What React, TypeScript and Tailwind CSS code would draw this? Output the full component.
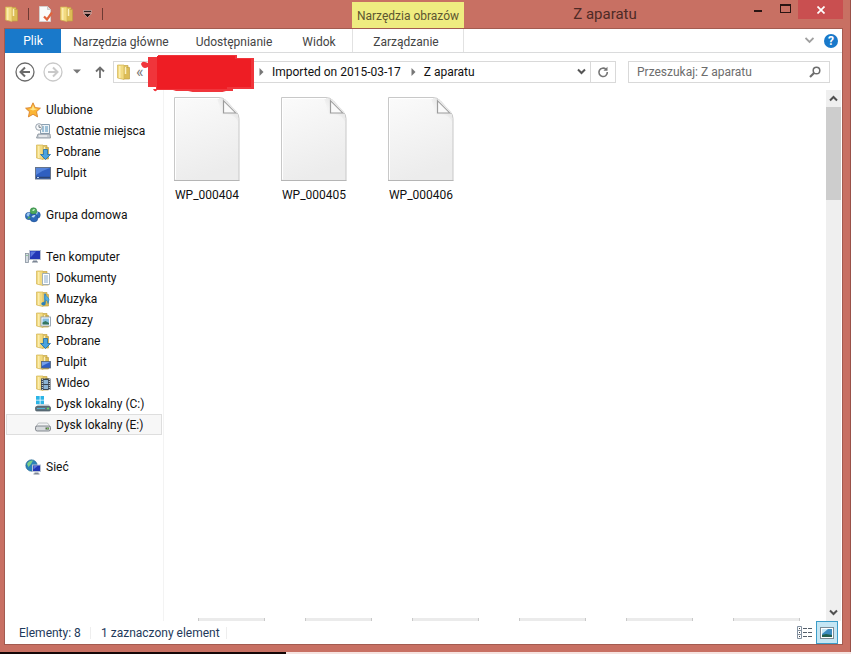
import React, { useState } from 'react';
import clsx from 'clsx';

type IconName =
  | 'star' | 'recent' | 'downloads' | 'desktop' | 'homegroup' | 'computer'
  | 'documents' | 'music' | 'pictures' | 'folderDesktop' | 'video' | 'diskC' | 'diskE' | 'network';

const groups: { id: string; label: string; icon: IconName; items: { label: string; icon: IconName }[] }[] = [
  {
    id: 'fav',
    label: 'Ulubione',
    icon: 'star',
    items: [
      { label: 'Ostatnie miejsca', icon: 'recent' },
      { label: 'Pobrane', icon: 'downloads' },
      { label: 'Pulpit', icon: 'desktop' },
    ],
  },
  { id: 'home', label: 'Grupa domowa', icon: 'homegroup', items: [] },
  {
    id: 'pc',
    label: 'Ten komputer',
    icon: 'computer',
    items: [
      { label: 'Dokumenty', icon: 'documents' },
      { label: 'Muzyka', icon: 'music' },
      { label: 'Obrazy', icon: 'pictures' },
      { label: 'Pobrane', icon: 'downloads' },
      { label: 'Pulpit', icon: 'folderDesktop' },
      { label: 'Wideo', icon: 'video' },
      { label: 'Dysk lokalny (C:)', icon: 'diskC' },
      { label: 'Dysk lokalny (E:)', icon: 'diskE' },
    ],
  },
  { id: 'net', label: 'Sieć', icon: 'network', items: [] },
];

const files = ['WP_000404', 'WP_000405', 'WP_000406'];

function FolderShape() {
  return (
    <>
      <path d="M5 1.500h7v13H5z" fill="#e3c765" stroke="#c3a244" strokeWidth=".7" />
      <path d="M7.500 3.500h6v11.500h-6z" fill="#dcbc55" stroke="#c0a044" strokeWidth=".7" />
      <path d="M1.500 1h6.500v14.500L1.500 14z" fill="#f2da80" stroke="#d3b455" strokeWidth=".7" />
      <path d="M3 2h1.500v12H3z" fill="#fbedaf" />
      <path d="M9.500 3v7" stroke="#fbf0c0" strokeWidth="1.500" />
    </>
  );
}

function FolderIcon() {
  return (
    <svg width="16" height="16" viewBox="0 0 16 16" className="shrink-0">
      <FolderShape />
    </svg>
  );
}

function Monitor({ x, y, w, h }: { x: number; y: number; w: number; h: number }) {
  return (
    <>
      <rect x={x} y={y} width={w} height={h} fill="#2337b5" stroke="#b9c3d3" strokeWidth="1" />
      <path d={`M${x + 1} ${y + 1}h${w / 2}l${-w / 2} ${h - 3}z`} fill="#5b76dd" />
      <path d={`M${x + w / 2 - 2} ${y + h + 1}h4v1h1v1h-6v-1h1z`} fill="#7b8594" />
    </>
  );
}

function Globe({ x, y, r, land }: { x: number; y: number; r: number; land: string }) {
  return (
    <>
      <circle cx={x} cy={y} r={r} fill="#2f6fc0" stroke="#1f4d8d" strokeWidth=".5" />
      <path d={`M${x - r + 1} ${y - 1}q${r / 2} ${-r} ${r} ${-r / 2}q${-r / 3} ${r} ${-r / 2} ${r}z`} fill={land} />
    </>
  );
}

function NavIcon({ name }: { name: IconName }) {
  return (
    <svg width="16" height="16" viewBox="0 0 16 16" className="shrink-0">
      {name === 'star' && (
        <>
          <path d="M8 .8l2.200 4.800 5.200.6-3.900 3.500 1.100 5.200L8 12.300l-4.600 2.600 1.100-5.200L.6 6.200l5.200-.6z" fill="#fbb534" stroke="#d9822b" strokeWidth=".9" />
          <path d="M8 3l1.400 3.500 3.200.5-4.600 1.500-4-1.500 2.800-.5z" fill="#ffe58a" />
        </>
      )}
      {name === 'recent' && (
        <>
          <path d="M5.500 1.500h9v9h-9z" fill="#eef4f8" stroke="#8ba1b3" />
          <path d="M7 4h2M10 4h3M7 6h2M10 6h3M7 8h2M10 8h3" stroke="#4e8fb8" />
          <path d="M3 11h12l.5 4H1.500z" fill="#c9ced4" stroke="#848d97" strokeWidth=".8" />
          <path d="M4 13h8" stroke="#fff" />
          <circle cx="4" cy="4" r="3.300" fill="#f7f9fa" stroke="#98a3ad" />
          <path d="M4 2v2.300h2" fill="none" stroke="#59636e" strokeWidth=".8" />
        </>
      )}
      {name === 'desktop' && (
        <>
          <rect x=".5" y="2.500" width="15" height="11.500" fill="#2f5fc0" stroke="#66748a" />
          <path d="M1 3h14Q8 5 1 10z" fill="#5685dc" />
          <path d="M1 12.500h14" stroke="#2a4475" strokeWidth="1.500" />
          <path d="M2 12.500h2" stroke="#b9d3f5" />
        </>
      )}
      {name === 'homegroup' && (
        <>
          <Globe x={4} y={9} r={3.7} land="#9cc8ef" />
          <Globe x={12} y={8} r={3.3} land="#9cc8ef" />
          <circle cx="8.500" cy="4" r="3.300" fill="#4ca85a" stroke="#2a7a3a" strokeWidth=".5" />
          <circle cx="9" cy="11" r="3.900" fill="#2c68b8" stroke="#1c4a8a" strokeWidth=".5" />
          <path d="M6.500 10q1-2.500 4-2l-1.500 2.500z" fill="#c0dcf7" />
          <path d="M7 3.500q1-2 3-1.500l-1 2z" fill="#d3f4cd" />
          <path d="M2 12l2-3 2 2z" fill="#4ca85a" />
        </>
      )}
      {name === 'computer' && (
        <>
          <rect x=".5" y="4.500" width="3" height="9" fill="#d5dbe2" stroke="#87929e" strokeWidth=".8" />
          <path d="M1.500 6.500h1" stroke="#4fae52" />
          <Monitor x={4.500} y={1.500} w={11} h={9} />
        </>
      )}
      {name === 'network' && (
        <>
          <circle cx="6.500" cy="6.500" r="5.700" fill="#2c83b8" stroke="#1e5f8c" strokeWidth=".6" />
          <path d="M2 5q2-4 6-3.500L6 5 3.500 8zM7 8l3-1v4l-2 .5z" fill="#7ccf86" />
          <Monitor x={7.500} y={6} w={8} h={6.500} />
        </>
      )}
      {['downloads', 'documents', 'music', 'pictures', 'folderDesktop', 'video'].includes(name) && <FolderShape />}
      {name === 'downloads' && (
        <path d="M8.500 5.500h4v5h3l-5 5-5-5h3z" fill="#4aa3df" stroke="#1d6ca8" strokeWidth=".8" />
      )}
      {name === 'documents' && (
        <>
          <path d="M7.500 3.500h7v11h-7z" fill="#fff" stroke="#8fa3b5" strokeWidth=".8" />
          <path d="M9 6h4M9 8h4M9 10h4M9 12h4" stroke="#7ba0c4" strokeWidth=".9" />
        </>
      )}
      {name === 'music' && (
        <>
          <path d="M10 3v9" stroke="#2b7fb8" strokeWidth="1.500" />
          <path d="M10 2.500q1 3 3 4t0 6q0-3-3-4z" fill="#53b0e0" stroke="#2b7fb8" strokeWidth=".6" />
          <ellipse cx="8.500" cy="12.800" rx="2.200" ry="1.700" fill="#2b7fb8" />
        </>
      )}
      {name === 'pictures' && (
        <>
          <rect x="6" y="5" width="9.500" height="9" fill="#fff" stroke="#8495a5" strokeWidth=".8" />
          <rect x="7.500" y="6.500" width="6.500" height="6" fill="#86bfe2" />
          <path d="M7.500 12.500v-2l3-1.500 3.500 2v1.500z" fill="#35755f" />
        </>
      )}
      {name === 'folderDesktop' && (
        <>
          <rect x="6.500" y="7.500" width="9" height="6.500" fill="#2f5fc4" stroke="#54657c" strokeWidth=".8" />
          <path d="M7 8h8l-8 4z" fill="#759fea" />
        </>
      )}
      {name === 'video' && (
        <>
          <rect x="6" y="3.500" width="9.500" height="11.500" fill="#3b4652" />
          <path d="M7.300 4v11M14.300 4v11" stroke="#e1e6ea" strokeDasharray="1 1" />
          <path d="M8.500 5h4.500v4h-4.500zM8.500 10h4.500v4h-4.500z" fill="#8cb4d4" />
        </>
      )}
      {name === 'diskC' && (
        <>
          <path d="M1 0h3.700v3.700H1zM5.500 0H9v3.700H5.500zM1 4.500h3.700v3.700H1zM5.500 4.500H9v3.700H5.500z" fill="#2bb4e6" />
          <path d="M3 8.500h11l1.500 3H.5z" fill="#b9c3ca" />
          <rect x=".5" y="10.500" width="15" height="4.500" rx="1.300" fill="#61737e" stroke="#44545e" strokeWidth=".7" />
          <path d="M2 12.500h8" stroke="#58b2d3" />
          <path d="M12 12.500h2" stroke="#69dc5a" strokeWidth="1.500" />
        </>
      )}
      {name === 'diskE' && (
        <>
          <path d="M3.500 6h9l3 4H.5z" fill="#f2f3f4" stroke="#a4a9ae" strokeWidth=".7" />
          <rect x=".5" y="9" width="15" height="5" rx="1.800" fill="#d6d9dc" stroke="#777d83" strokeWidth=".9" />
          <rect x="10.500" y="10.500" width="3.500" height="2" fill="#566b4c" />
          <path d="M12 11.500h1.500" stroke="#7ad05d" />
        </>
      )}
    </svg>
  );
}

function FileIcon() {
  return (
    <svg width="68" height="86" viewBox="0 0 68 86">
      <defs>
        <linearGradient id="paper" x1="0" y1="0" x2=".3" y2="1">
          <stop offset="0" stopColor="#fbfbfb" />
          <stop offset=".4" stopColor="#f5f5f5" />
          <stop offset="1" stopColor="#ececec" />
        </linearGradient>
        <linearGradient id="shade" x1="0" y1="1" x2="1" y2="0">
          <stop offset=".4" stopColor="#f3f3f3" />
          <stop offset="1" stopColor="#d6d6d6" />
        </linearGradient>
      </defs>
      <path d="M1.500 1.500H46q4 0 7 3l10 11q3 3 3 7V84.500H1.500z" fill="url(#paper)" stroke="#c8c8c8" />
      <path d="M44 2h3l6 3 10 11 2 4v6q-3-7-9-7h-7z" fill="url(#shade)" />
      <path d="M2.500 83.500V2.500H46" fill="none" stroke="#fff" />
      <path d="M1 84.500h65.500" stroke="#b5b5b5" />
      <path d="M50.500 4.500V17H63z" fill="#fafafa" stroke="#9c9c9c" strokeWidth="1.200" />
      <path d="M51 3.500q1 1 13 13" fill="none" stroke="#e8e8e8" strokeWidth="1.500" />
    </svg>
  );
}

function TitleBar() {
  return (
    <header className="flex h-7 shrink-0 text-[#3b2320]">
      <div className="flex w-[348px] shrink-0 items-center">
        <FolderIcon />
        <span className="ml-2 h-3 w-px bg-[#6d3a33]" />
        <button aria-label="Właściwości" className="ml-2">
          <svg width="16" height="16" viewBox="0 0 16 16">
            <path d="M2.500.5h8l3 3v12h-11z" fill="#fafafa" stroke="#d5cfcd" />
            <path d="M10.500.5v3h3" fill="#ddd" stroke="#bbb" strokeWidth=".7" />
            <path d="M7 10.500l3 3 5-7" fill="none" stroke="#e0633b" strokeWidth="2.200" />
          </svg>
        </button>
        <button aria-label="Nowy folder" className="ml-1.5"><FolderIcon /></button>
        <button aria-label="Dostosuj" className="ml-2">
          <svg width="9" height="8" viewBox="0 0 9 8">
            <path d="M.5.500h8v1.800h-8zM.5 3.500h8L4.500 7.500z" fill="#1c1010" stroke="#f0d6d2" strokeWidth=".5" />
          </svg>
        </button>
        <span className="ml-2.5 h-3 w-px bg-[#6d3a33]" />
      </div>
      <div className="mt-0.5 flex w-28 shrink-0 items-center justify-center bg-[#efec80] pt-0.5 text-[12px] text-[#5d5630]">
        Narzędzia obrazów
      </div>
      <h1 className="flex-1 pl-0.5 text-center text-[15px] leading-7 text-[#4e2a26]">Z aparatu</h1>
      <button aria-label="Minimalizuj" className="flex h-5 w-7 justify-center pt-2.5">
        <span className="h-0.5 w-2 bg-[#2a1513]" />
      </button>
      <button aria-label="Maksymalizuj" className="flex h-5 w-[26px] justify-center pt-1">
        <span className="h-[9px] w-[11px] border border-t-2 border-[#2a1513]" />
      </button>
      <button aria-label="Zamknij" className="flex h-[19px] w-[45px] items-center justify-center bg-[#c94f50]">
        <svg width="8" height="8" viewBox="0 0 8 8">
          <path d="M.5.5l7 7M7.500.5l-7 7" stroke="#fff" strokeWidth="1.700" />
        </svg>
      </button>
    </header>
  );
}

function Ribbon() {
  return (
    <nav className="flex h-6 shrink-0 items-stretch border-b border-[#dadbdc] text-[12px] text-[#444]">
      <button className="-mb-px w-14 bg-[#1979ca] text-white">Plik</button>
      <button className="w-[120px] pt-0.5">Narzędzia główne</button>
      <button className="w-[106px] pt-0.5">Udostępnianie</button>
      <button className="w-16 pt-0.5">Widok</button>
      <button className="ml-px w-28 border-x border-[#e2e2e2] pt-0.5 pr-1">Zarządzanie</button>
      <div className="ml-auto flex items-center gap-2.5 pr-1">
        <button aria-label="Minimalizuj wstążkę">
          <svg width="9" height="7" viewBox="0 0 9 7">
            <path d="M.5 1l4 4 4-4" fill="none" stroke="#a0a0a0" strokeWidth="1.800" />
          </svg>
        </button>
        <button aria-label="Pomoc" className="size-3.5 rounded-full bg-[#1979ca] text-[12px] leading-3.5 font-bold text-white">
          ?
        </button>
      </div>
    </nav>
  );
}

function Crumb() {
  return (
    <svg width="5" height="8" viewBox="0 0 5 8" className="shrink-0">
      <path d="M.5 0l4 4-4 4z" fill="#777" />
    </svg>
  );
}

function AddressRow() {
  const [query, setQuery] = useState('');

  return (
    <div className="flex h-[37px] shrink-0 items-center pr-3">
      <button aria-label="Wstecz" className="ml-2.5">
        <svg width="20" height="20" viewBox="0 0 20 20" fill="none" stroke="#6b6b6b">
          <circle cx="10" cy="10" r="9" strokeWidth="1.300" />
          <path d="M15 10H6M10 5.500L5.500 10l4.500 4.500" strokeWidth="2" />
        </svg>
      </button>
      <button aria-label="Dalej" className="ml-2">
        <svg width="20" height="20" viewBox="0 0 20 20" fill="none" stroke="#c9c9c9">
          <circle cx="10" cy="10" r="9" strokeWidth="1.300" />
          <path d="M5 10h9M10 5.500l4.500 4.500-4.500 4.500" strokeWidth="2" />
        </svg>
      </button>
      <button aria-label="Historia" className="ml-2.5">
        <svg width="8" height="5" viewBox="0 0 8 5"><path d="M0 .5h8L4 4.500z" fill="#777" /></svg>
      </button>
      <button aria-label="W górę" className="ml-3.5">
        <svg width="10" height="12" viewBox="0 0 10 12" fill="none" stroke="#6f6f6f" strokeWidth="1.800">
          <path d="M5 12V1.500M1 5.500l4-4 4 4" />
        </svg>
      </button>
      <div className="ml-2 flex h-[22px] min-w-0 flex-1 items-center border border-[#d9d9d9] pl-0.5 text-[12px] text-[#111]">
        <FolderIcon />
        <span className="relative ml-1 w-[123px] shrink-0 text-[16px] leading-4 text-[#777]">
          «
          <svg width="122" height="40" viewBox="0 0 122 40" className="absolute -top-3 -left-px">
            <path
              d="M6 12q1-3 4-2l3 1V5h10V3h79v3h17v31h-21v2h-7q-9 3-24 3l-14-3h-12l-3-1H22q-2 3-4-1H21v-2h-8V15q-5 3-7-3z"
              fill="#f0353b"
            />
            <path d="M22 4h78v3h16v28H92v2H22z" fill="#ee1d24" />
          </svg>
        </span>
        <Crumb />
        <span className="ml-2 whitespace-nowrap">Imported on 2015-03-17</span>
        <span className="ml-2.5"><Crumb /></span>
        <span className="ml-2 whitespace-nowrap">Z aparatu</span>
        <button aria-label="Poprzednie lokalizacje" className="ml-auto px-1">
          <svg width="9" height="7" viewBox="0 0 9 7">
            <path d="M1 1.500l3.500 3.500 3.500-3.500" fill="none" stroke="#555" strokeWidth="2" />
          </svg>
        </button>
        <button aria-label="Odśwież" className="flex h-full w-[25px] items-center justify-center border-l border-[#d9d9d9]">
          <svg width="12" height="12" viewBox="0 0 12 12">
            <path d="M9 3.300A4.200 4.200 0 1 0 10.300 6" fill="none" stroke="#747474" strokeWidth="1.600" />
            <path d="M6.500 4.800h4V.8z" fill="#747474" />
          </svg>
        </button>
      </div>
      <label className="ml-3 flex h-[22px] w-[202px] shrink-0 items-center border border-[#d9d9d9] px-2">
        <input
          type="text"
          aria-label="Przeszukaj"
          placeholder="Przeszukaj: Z aparatu"
          value={query}
          onChange={e => setQuery(e.target.value)}
          className="min-w-0 flex-1 text-[12px] outline-none placeholder:text-[#6d6d6d]"
        />
        <svg width="12" height="12" viewBox="0 0 12 12" fill="none" stroke="#6d6d6d">
          <circle cx="7.500" cy="4.500" r="3.300" strokeWidth="1.500" />
          <path d="M5 7L1 11" strokeWidth="2.200" />
        </svg>
      </label>
    </div>
  );
}

function Sidebar() {
  const [selected, setSelected] = useState('pc-Dysk lokalny (E:)');

  return (
    <aside className="w-[159px] shrink-0 border-r border-[#f3f3f3] pt-[9px] pr-px pl-px text-[12px] text-[#111]">
      {groups.map(group => (
        <div key={group.id} className="mb-[21px]">
          <button className="flex h-[21px] w-full items-center gap-[5px] pl-[19px] whitespace-nowrap">
            <NavIcon name={group.icon} />
            {group.label}
          </button>
          {group.items.map(item => {
            const id = `${group.id}-${item.label}`;
            return (
              <button
                key={id}
                onClick={() => setSelected(id)}
                className={clsx(
                  'flex h-[21px] w-full items-center gap-[5px] border pl-7 whitespace-nowrap',
                  selected === id ? 'border-[#dedede] bg-[#f7f7f7]' : 'border-transparent'
                )}
              >
                <NavIcon name={item.icon} />
                {item.label}
              </button>
            );
          })}
        </div>
      ))}
    </aside>
  );
}

function ScrollBar() {
  return (
    <div className="mr-px flex w-[15px] shrink-0 flex-col items-center bg-[#efefef]">
      <button aria-label="W górę" className="flex h-[17px] shrink-0 items-center">
        <svg width="9" height="7" viewBox="0 0 9 7">
          <path d="M1 5.500L4.500 2 8 5.500" fill="none" stroke="#505050" strokeWidth="2" />
        </svg>
      </button>
      <div className="h-[93px] w-full bg-[#cdcdcd]" />
      <button aria-label="W dół" className="mt-auto flex h-[17px] shrink-0 items-center">
        <svg width="9" height="7" viewBox="0 0 9 7">
          <path d="M1 1.500L4.500 5 8 1.500" fill="none" stroke="#505050" strokeWidth="2" />
        </svg>
      </button>
    </div>
  );
}

export default function App() {
  return (
    <div className="flex h-screen flex-col bg-[#201010] font-[Roboto,'Noto_Sans',sans-serif]">
      <div className="flex min-h-0 flex-1 flex-col border-r border-[#9a5149] bg-[#c87063] pr-[7px] pb-[7px] pl-1">
        <TitleBar />
        <div className="flex min-h-0 flex-1 flex-col border border-[#a35b50] bg-white">
          <Ribbon />
          <AddressRow />
          <main className="flex min-h-0 flex-1">
            <Sidebar />
            <section className="flex min-w-0 flex-1 flex-col justify-between overflow-hidden pt-1.5">
              <ul className="flex">
                {files.map(name => (
                  <li key={name} className="flex w-[107px] shrink-0 flex-col items-center pr-[21px] text-[12px] text-[#111]">
                    <FileIcon />
                    <span className="mt-[5px] leading-4">{name}</span>
                  </li>
                ))}
              </ul>
              {/* top edges of the next row, cut off by the viewport */}
              <div className="flex gap-10 pl-[34px]">
                {[0, 1, 2, 3, 4, 5].map(i => (
                  <div key={i} className="h-[3px] w-[67px] shrink-0 border-x border-[#c9c9c9] bg-[#ebebeb]" />
                ))}
              </div>
            </section>
            <ScrollBar />
          </main>
          <footer className="flex h-[23px] shrink-0 items-center pl-3.5 text-[12px] text-[#1e395b]">
            <span className="w-[71px]">Elementy: 8</span>
            <span className="h-3 w-px bg-[#eee]" />
            <span className="ml-2.5 w-[125px] whitespace-nowrap">1 zaznaczony element</span>
            <span className="h-3 w-px bg-[#eee]" />
            <div className="ml-auto flex items-center gap-1 pr-1">
              <button aria-label="Szczegóły">
                <svg width="15" height="13" viewBox="0 0 15 13" fill="none">
                  <path d="M.5.5h4v4h-4zM.5 4.500h4v4h-4zM.5 8.500h4v4h-4z" stroke="#8391a0" />
                  <path d="M2 2.500h1M2 6.500h1M2 10.500h1" stroke="#444" />
                  <path d="M6 2.500h4M11 2.500h4M6 6.500h4M11 6.500h4M6 10.500h4M11 10.500h4" stroke="#555f6a" />
                </svg>
              </button>
              <button aria-label="Duże ikony" className="flex h-[23px] w-[22px] items-center justify-center border border-[#3c9dc9] bg-[#c5e6f4]">
                <svg width="14" height="12" viewBox="0 0 14 12">
                  <rect x=".5" y=".5" width="13" height="11" fill="#fff" stroke="#7d8b95" />
                  <rect x="2" y="2" width="10" height="8" fill="#3d8cc0" />
                  <path d="M2 2h6L2 7z" fill="#c8e9f7" />
                  <path d="M2 10V8l4-1 6 1v2z" fill="#23604f" />
                </svg>
              </button>
            </div>
          </footer>
        </div>
      </div>
      <div className="flex h-0.5 shrink-0">
        <div className="w-[286px] bg-[#140606]" />
        <div className="flex-1 bg-[#f6e3e0]" />
      </div>
    </div>
  );
}
